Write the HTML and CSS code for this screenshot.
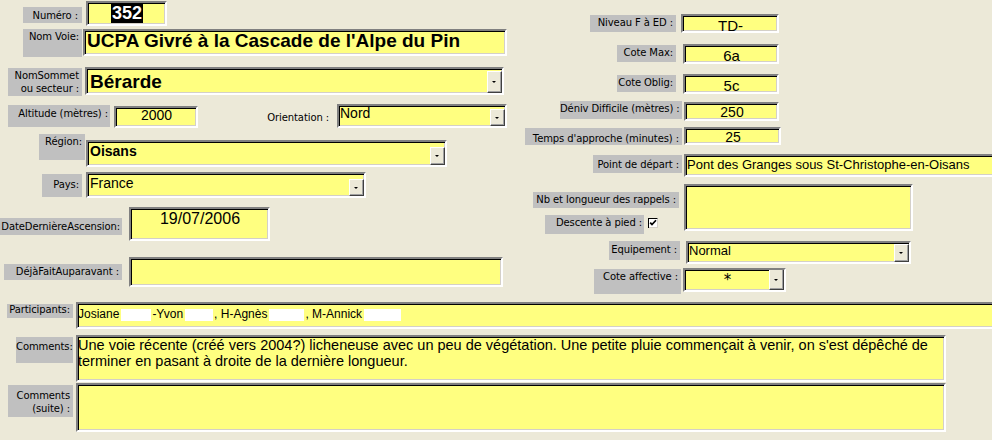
FILE: index.html
```html
<!DOCTYPE html>
<html lang="fr">
<head>
<meta charset="utf-8">
<title>Voie</title>
<link rel="stylesheet" href="styles.css">
</head>
<body>
<div class="form">
  <div class="top">
    <div class="col-left">
      <div class="row r1">
        <div class="lbl l-num">Numéro :</div>
        <div class="fld f-num"><span class="sel">352</span></div>
      </div>
      <div class="row r2">
        <div class="lbl l-voie">Nom Voie:</div>
        <div class="fld f-voie">UCPA Givré à la Cascade de l'Alpe du Pin</div>
      </div>
      <div class="row r3">
        <div class="lbl l-sommet">NomSommet<br>ou secteur :</div>
        <div class="fld f-sommet">Bérarde<span class="dd dd-22"></span></div>
      </div>
      <div class="row r4">
        <div class="lbl l-alt">Altitude (mètres) :</div>
        <div class="fld f-alt">2000</div>
        <div class="plain l-orient">Orientation :</div>
        <div class="fld f-orient">Nord<span class="dd dd-17"></span></div>
      </div>
      <div class="row r5">
        <div class="lbl l-region">Région:</div>
        <div class="fld f-region">Oisans<span class="dd dd-18"></span></div>
      </div>
      <div class="row r6">
        <div class="lbl l-pays">Pays:</div>
        <div class="fld f-pays">France<span class="dd dd-17"></span></div>
      </div>
      <div class="row r7">
        <div class="lbl l-date">DateDernièreAscension:</div>
        <div class="fld f-date">19/07/2006</div>
      </div>
      <div class="row r8">
        <div class="lbl l-deja">DéjàFaitAuparavant :</div>
        <div class="fld f-deja"></div>
      </div>
    </div>
    <div class="col-right">
      <div class="row q1">
        <div class="lbl l-niv">Niveau F à ED :</div>
        <div class="fld f-niv">TD-</div>
      </div>
      <div class="row q2">
        <div class="lbl l-max">Cote Max:</div>
        <div class="fld f-max">6a</div>
      </div>
      <div class="row q3">
        <div class="lbl l-max">Cote Oblig:</div>
        <div class="fld f-max">5c</div>
      </div>
      <div class="row q4">
        <div class="lbl l-deniv">Déniv Difficile (mètres) :</div>
        <div class="fld f-deniv">250</div>
      </div>
      <div class="row q5">
        <div class="lbl l-temps">Temps d'approche (minutes) :</div>
        <div class="fld f-temps">25</div>
      </div>
      <div class="row q6">
        <div class="lbl l-point">Point de départ :</div>
        <div class="fld f-point">Pont des Granges sous St-Christophe-en-Oisans</div>
      </div>
      <div class="row q7">
        <div class="g-rappels">
          <div class="lbl l-nb">Nb et longueur des rappels :</div>
          <div class="descente">
            <div class="lbl l-desc">Descente à pied :</div>
            <svg class="chk" width="10" height="10" viewBox="0 0 10 10">
              <rect x="0" y="0" width="10" height="10" fill="#ffffff"/>
              <path d="M0 0.5H9.5M0.5 0V10" stroke="#000" stroke-width="1"/>
              <path d="M9.5 1V10M1 9.5H10" stroke="#d4d0c8" stroke-width="1"/>
              <path d="M2.2 4.6L4 6.6L8 2.2" fill="none" stroke="#000" stroke-width="1.7"/>
            </svg>
          </div>
        </div>
        <div class="fld f-nb"></div>
      </div>
      <div class="row q8">
        <div class="lbl l-equip">Equipement :</div>
        <div class="fld f-equip">Normal<span class="dd dd-18"></span></div>
      </div>
      <div class="row q9">
        <div class="lbl l-aff">Cote affective :</div>
        <div class="fld f-aff">*<span class="dd dd-21"></span></div>
      </div>
    </div>
  </div>
  <div class="bottom">
    <div class="row b1">
      <div class="lbl l-part">Participants:</div>
      <div class="fld f-part">Josiane<span class="mask m1"></span>-Yvon<span class="mask m2"></span>, H-Agnès<span class="mask m3"></span>, M-Annick<span class="mask m4"></span></div>
    </div>
    <div class="row b2">
      <div class="lbl l-com">Comments:</div>
      <div class="fld f-com">Une voie récente (créé vers 2004?) licheneuse avec un peu de végétation. Une petite pluie commençait à venir, on s'est dépêché de<br>terminer en pasant à droite de la dernière longueur.</div>
    </div>
    <div class="row b3">
      <div class="lbl l-suite">Comments<br>(suite) :</div>
      <div class="fld f-suite"></div>
    </div>
  </div>
</div>
</body>
</html>
```
FILE: styles.css
```css
html, body {
  margin: 0;
  padding: 0;
  background: #ece9d8;
}

.form {
  width: 992px;
  height: 440px;
  overflow: hidden;
  background: #ece9d8;
}

.top {
  display: flex;
  align-items: flex-start;
  height: 294px;
}

.col-left {
  width: 520px;
  flex: none;
}

.col-right {
  flex: 1;
  min-width: 0;
}

.row {
  display: flex;
  align-items: flex-start;
}

.row > * {
  flex: none;
}

/* labels */
.lbl {
  background: #c0c0c0;
  font-family: "DejaVu Sans", sans-serif;
  font-size: 10px;
  line-height: 12px;
  letter-spacing: -0.1px;
  color: #000;
  text-align: right;
  padding-right: 3px;
  box-sizing: border-box;
  white-space: nowrap;
  overflow: hidden;
}

.plain {
  font-family: "DejaVu Sans", sans-serif;
  font-size: 10px;
  line-height: 12px;
  letter-spacing: -0.1px;
  color: #000;
  text-align: right;
  padding-right: 4px;
  box-sizing: border-box;
  white-space: nowrap;
}

/* fields */
.fld {
  position: relative;
  background: #ffff80;
  border: 2px solid;
  border-color: #808080 #ffffff #ffffff #808080;
  box-shadow: inset 1px 1px 0 #000000, inset -1px -1px 0 #d4d0c8;
  box-sizing: border-box;
  font-family: "Liberation Sans", Arial, sans-serif;
  color: #000;
  white-space: nowrap;
  overflow: hidden;
  padding-left: 1px;
}

.dd {
  position: absolute;
  right: 0;
  bottom: 0;
  width: 15px;
  height: 17px;
  background: #ece9d8;
  border: 1px solid;
  border-color: #ffffff #404040 #404040 #ffffff;
  box-shadow: inset -1px -1px 0 #a0a0a0;
  box-sizing: border-box;
}

.dd::after {
  content: "";
  position: absolute;
  left: 4px;
  top: 50%;
  margin-top: -1px;
  border-left: 2px solid transparent;
  border-right: 2px solid transparent;
  border-top: 2px solid #000;
}

.dd-17 { height: 17px; }
.dd-18 { height: 18px; }
.dd-21 { height: 21px; }
.dd-22 { height: 22px; }

/* left column */
.r1 { margin-top: 1px; }
.l-num { margin: 6px 0 0 23px; width: 59px; height: 16px; padding-top: 3px; padding-right: 4px; }
.f-num {
  margin-left: 4px; width: 81px; height: 25px;
  text-align: center; font-weight: bold; font-size: 18px; line-height: 20px;
}
.sel { background: #000; color: #fff; padding: 0 1px; }

.r2 { margin-top: 3px; }
.l-voie { margin-left: 23px; width: 59px; height: 28px; padding-top: 2px; }
.f-voie {
  margin-left: 1px; width: 424px; height: 27px;
  font-weight: bold; font-size: 19px; line-height: 19px; padding-left: 2px;
}

.r3 { margin-top: 10px; }
.l-sommet { margin: 1px 0 0 8px; width: 74px; height: 28px; line-height: 13px; padding-top: 1px; }
.f-sommet {
  margin-left: 3px; width: 419px; height: 28px;
  font-weight: bold; font-size: 19px; line-height: 19px; padding-top: 3px; padding-left: 3px;
}

.r4 { margin-top: 8px; }
.l-alt { margin: 1px 0 0 8px; width: 102px; height: 22px; padding-top: 3px; padding-right: 2px; }
.f-alt {
  margin: 2px 0 0 4px; width: 84px; height: 22px;
  text-align: center; font-size: 14px; line-height: 14px;
}
.l-orient { margin-top: 8px; width: 135px; }
.f-orient {
  margin-left: 4px; width: 170px; height: 24px;
  font-size: 14px; line-height: 14px;
}

.r5 { margin-top: 6px; }
.l-region { margin-left: 39px; width: 46px; height: 26px; padding-top: 2px; }
.f-region {
  margin: 6px 0 0 1px; width: 361px; height: 27px;
  font-weight: bold; font-size: 14px; line-height: 14px; padding-top: 2px; padding-left: 2px;
}

.r6 { margin-top: 5px; }
.l-pays { margin: 2px 0 0 42px; width: 40px; height: 23px; padding-top: 5px; }
.f-pays {
  margin-left: 4px; width: 280px; height: 26px;
  font-size: 14px; line-height: 14px; padding-top: 2px; padding-left: 2px;
}

.r7 { margin-top: 9px; }
.l-date { margin-top: 11px; width: 122px; height: 17px; padding-top: 3px; padding-right: 2px; }
.f-date {
  margin-left: 7px; width: 141px; height: 34px;
  text-align: center; font-size: 16px; line-height: 16px; padding-top: 2px;
}

.r8 { margin-top: 16px; }
.l-deja { margin: 7px 0 0 4px; width: 118px; height: 16px; padding-top: 2px; }
.f-deja { margin-left: 7px; width: 374px; height: 30px; }

/* right column */
.q1 { margin-top: 14px; }
.l-niv { margin: 1px 0 0 70px; width: 86px; height: 17px; padding-top: 2px; }
.f-niv {
  margin-left: 5px; width: 98px; height: 19px;
  text-align: center; font-size: 15px; line-height: 15px; padding-top: 2px;
}

.q2 { margin-top: 11px; }
.q3 { margin-top: 10px; }
.l-max { margin: 1px 0 0 97px; width: 59px; height: 17px; padding-top: 2px; }
.f-max {
  margin-left: 7px; width: 96px; height: 20px;
  text-align: center; font-size: 15px; line-height: 15px; padding-top: 2px;
}

.q4 { margin-top: 7px; }
.l-deniv { margin-left: 40px; width: 122px; height: 18px; padding-top: 2px; }
.f-deniv {
  margin: 1px 0 0 2px; width: 95px; height: 19px;
  text-align: center; font-size: 14px; line-height: 14px; padding-top: 1px;
}

.q5 { margin-top: 6px; }
.l-temps { margin: 1px 0 0 5px; width: 157px; height: 17px; padding-top: 5px; }
.f-temps {
  margin-left: 2px; width: 97px; height: 18px;
  text-align: center; font-size: 14px; line-height: 14px; padding-top: 1px;
}

.q6 { margin-top: 9px; }
.l-point { margin: 1px 0 0 73px; width: 89px; height: 18px; padding-top: 4px; }
.f-point {
  margin-left: 2px; width: 320px; height: 23px;
  font-size: 13px; line-height: 13px; padding-top: 2px;
}

.q7 { margin-top: 7px; }
.g-rappels { width: 164px; }
.l-nb { margin: 8px 0 0 13px; width: 146px; height: 16px; padding-top: 2px; }
.descente {
  display: flex;
  align-items: flex-start;
  margin-top: 7px;
}
.l-desc { margin-left: 25px; width: 99px; height: 19px; padding-top: 2px; padding-right: 2px; flex: none; }
.chk { display: block; margin: 3px 0 0 4px; flex: none; }
.f-nb { width: 229px; height: 47px; }

.q8 { margin-top: 7px; }
.l-equip { margin-left: 89px; width: 71px; height: 19px; padding-top: 3px; }
.f-equip {
  margin-left: 6px; width: 225px; height: 23px;
  font-size: 13px; line-height: 13px; padding-top: 1px;
}

.q9 { margin-top: 4px; }
.l-aff { margin: 1px 0 0 74px; width: 87px; height: 25px; padding-top: 2px; }
.f-aff {
  margin-left: 2px; width: 103px; height: 24px;
  text-align: center; padding-right: 15px;
  font-family: "DejaVu Sans", sans-serif; font-size: 15px; line-height: 20px;
}

/* bottom */
.bottom { margin-top: 8px; }

.l-part { margin: 2px 0 0 7px; width: 66px; height: 14px; padding-top: 0; line-height: 12px; }
.f-part {
  margin-left: 3px; width: 930px; height: 27px;
  font-size: 12px; line-height: 14px; padding-top: 3px; padding-left: 0;
}
.mask {
  display: inline-block;
  background: #ffffff;
  height: 12px;
  vertical-align: -3px;
  margin: 0 1px 0 2px;
}
.m1 { width: 30px; }
.m2 { width: 28px; }
.m3 { width: 35px; }
.m4 { width: 37px; }

.b2 { margin-top: 6px; }
.l-com { margin: 2px 0 0 16px; width: 57px; height: 26px; padding-top: 4px; }
.f-com {
  margin-left: 3px; width: 870px; height: 47px;
  font-size: 14.5px; line-height: 16px; padding-left: 0;
}

.b3 { margin-top: 1px; }
.l-suite { margin: 2px 0 0 8px; width: 65px; height: 32px; line-height: 13px; padding-top: 4px; }
.f-suite { margin-left: 3px; width: 870px; height: 49px; }
```
